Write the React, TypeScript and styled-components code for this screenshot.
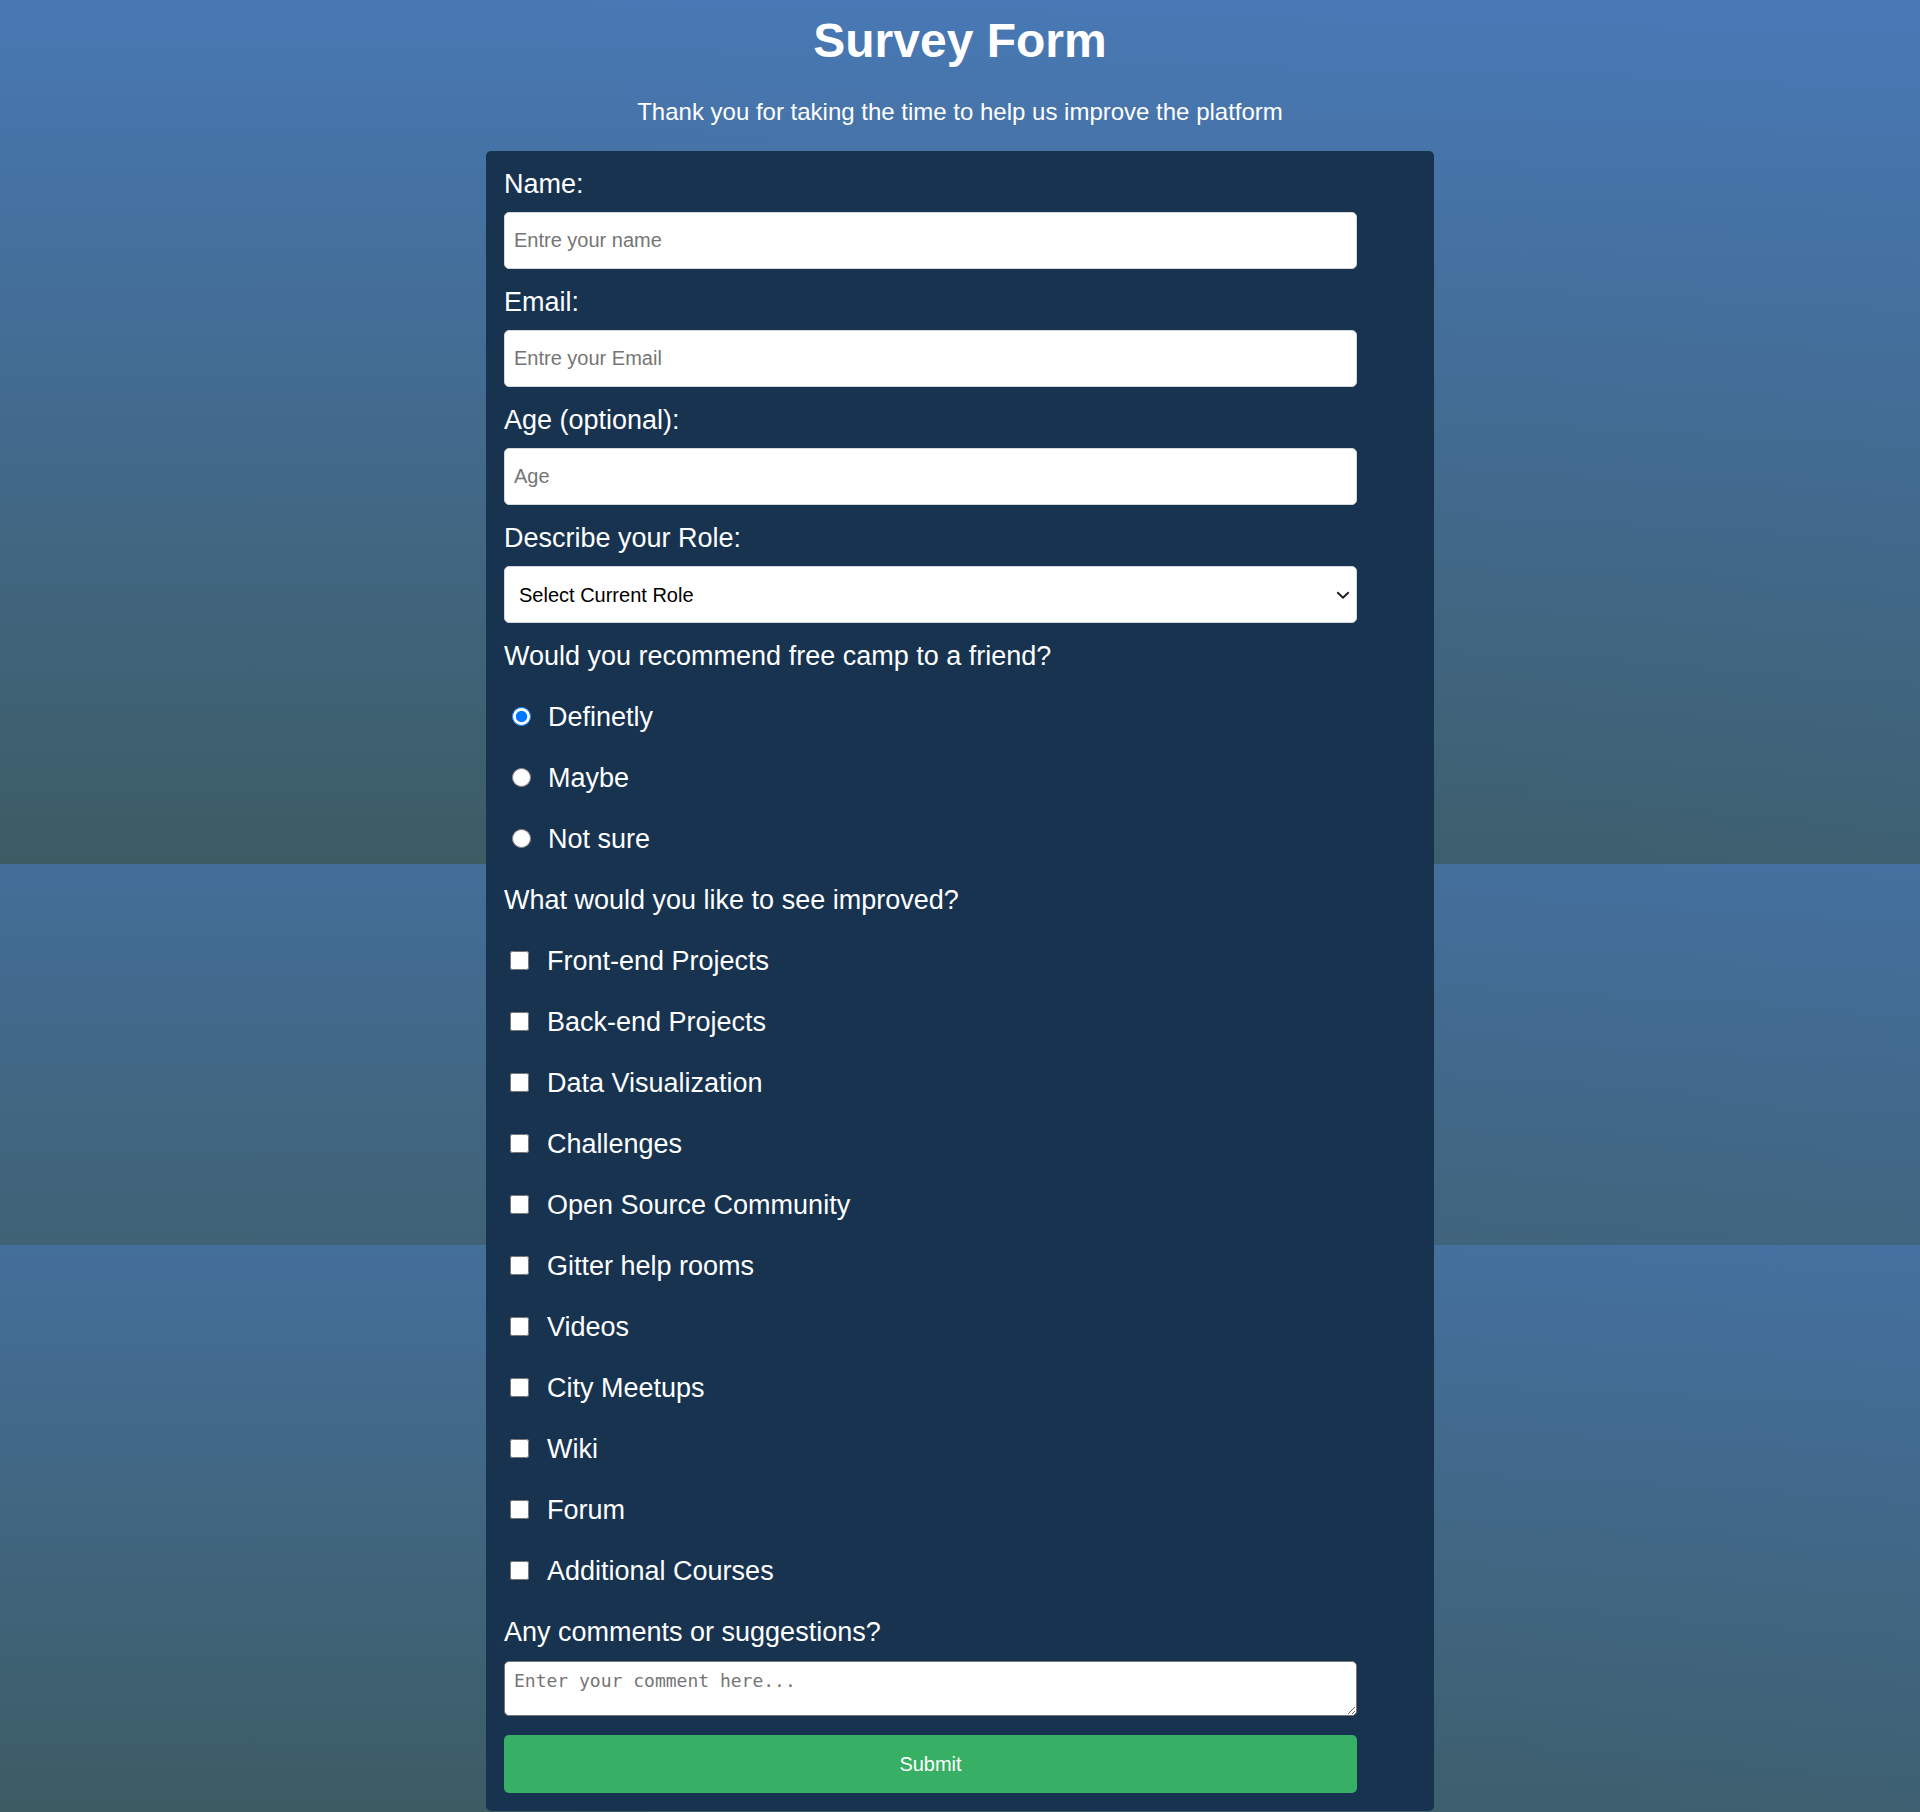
import React from "react";
import styled, { createGlobalStyle } from "styled-components";

const GlobalStyle = createGlobalStyle`
  html, body {
    margin: 0;
    padding: 0;
  }
  body {
    font-family: "Liberation Sans", Arial, sans-serif;
    color: #ffffff;
    background-color: #3c5c64;
    background-image:
      linear-gradient(to right, rgba(74, 124, 205, 0) 25%, rgba(74, 124, 205, 0.12) 100%),
      linear-gradient(
        to bottom,
        #4878b4 0px,
        #3c5c64 864px,
        #446e99 864px,
        #3f6275 1245px,
        #446f9a 1245px,
        #3c5c64 1812px
      );
    background-size: 100% 1812px, 100% 1812px;
    background-repeat: no-repeat;
  }
`;

const Page = styled.main`
  display: flex;
  flex-direction: column;
  align-items: center;
  padding: 13px 0 1px;
`;

const Title = styled.h1`
  margin: 0;
  font-size: 48px;
  line-height: 55px;
  font-weight: 700;
  text-align: center;
`;

const Subtitle = styled.p`
  margin: 30px 0 25px;
  font-size: 24px;
  line-height: 28px;
  text-align: center;
`;

const Form = styled.form`
  width: 948px;
  box-sizing: border-box;
  padding: 17px 18px 18px;
  background: #17334f;
  border-radius: 5px;
  display: flex;
  flex-direction: column;
`;

const Field = styled.div<{ $mb?: number }>`
  display: flex;
  flex-direction: column;
  margin-bottom: ${(p) => p.$mb ?? 17}px;
`;

const Label = styled.label<{ $mb?: number }>`
  display: block;
  font-size: 27px;
  line-height: 31px;
  padding-top: 1px;
  margin-bottom: ${(p) => p.$mb ?? 12}px;
`;

const controlBase = `
  display: block;
  width: 853px;
  box-sizing: border-box;
  background: #ffffff;
  border-radius: 5px;
  margin: 0;
`;

const TextInput = styled.input`
  ${controlBase}
  height: 57px;
  padding: 0 9px;
  border: 1px solid #d3d6da;
  font-family: "Liberation Sans", Arial, sans-serif;
  font-size: 20px;
  color: #000;
  &::placeholder {
    color: #757575;
  }
`;

const SelectWrap = styled.div`
  position: relative;
  width: 853px;
`;

const Select = styled.select`
  ${controlBase}
  appearance: none;
  -webkit-appearance: none;
  height: 57px;
  padding: 0 30px 0 14px;
  border: 1px solid #d3d6da;
  font-family: "Liberation Sans", Arial, sans-serif;
  font-size: 20px;
  color: #000;
`;

const Chevron = styled.svg`
  position: absolute;
  right: 7px;
  top: 50%;
  width: 14px;
  height: 8px;
  transform: translateY(-50%);
  pointer-events: none;
`;

const Option = styled.div`
  display: flex;
  align-items: center;
  height: 31px;
  margin-top: 30px;
  font-size: 27px;
  line-height: 31px;
`;

const OptionText = styled.span`
  padding-top: 2px;
`;

const Radio = styled.input`
  width: 19px;
  height: 19px;
  margin: 0 17px 0 8px;
  flex: none;
`;

const Check = styled.input`
  width: 19px;
  height: 19px;
  margin: 0 18px 0 6px;
  flex: none;
`;

const Comment = styled.textarea`
  ${controlBase}
  height: 55px;
  padding: 8px 9px;
  border: 1px solid #767676;
  font-family: "DejaVu Sans Mono", "Liberation Mono", monospace;
  font-size: 18px;
  color: #000;
  &::placeholder {
    color: #757575;
  }
`;

const Submit = styled.button`
  ${controlBase}
  height: 58px;
  margin-top: 19px;
  border: none;
  background: #37af65;
  color: #ffffff;
  font-family: "Liberation Sans", Arial, sans-serif;
  font-size: 20px;
  cursor: pointer;
`;

const recommend = ["Definetly", "Maybe", "Not sure"];
const improvements = [
  "Front-end Projects",
  "Back-end Projects",
  "Data Visualization",
  "Challenges",
  "Open Source Community",
  "Gitter help rooms",
  "Videos",
  "City Meetups",
  "Wiki",
  "Forum",
  "Additional Courses",
];

export default function App() {
  return (
    <>
      <GlobalStyle />
      <Page>
        <Title>Survey Form</Title>
        <Subtitle>Thank you for taking the time to help us improve the platform</Subtitle>
        <Form onSubmit={(e) => e.preventDefault()}>
          <Field>
            <Label htmlFor="name">Name:</Label>
            <TextInput id="name" type="text" placeholder="Entre your name" />
          </Field>
          <Field>
            <Label htmlFor="email">Email:</Label>
            <TextInput id="email" type="email" placeholder="Entre your Email" />
          </Field>
          <Field>
            <Label htmlFor="age">Age (optional):</Label>
            <TextInput id="age" type="number" placeholder="Age" />
          </Field>
          <Field>
            <Label htmlFor="role">Describe your Role:</Label>
            <SelectWrap>
              <Select id="role" defaultValue="">
                <option value="">Select Current Role</option>
                <option value="student">Student</option>
                <option value="job">Full Time Job</option>
                <option value="learner">Full Time Learner</option>
                <option value="other">Other</option>
              </Select>
              <Chevron viewBox="0 0 14 8" aria-hidden="true">
                <path
                  d="M1.3 1.2 L7 6.6 L12.7 1.2"
                  fill="none"
                  stroke="#1c1c1c"
                  strokeWidth="1.9"
                />
              </Chevron>
            </SelectWrap>
          </Field>
          <Field $mb={30}>
            <Label $mb={-1}>Would you recommend free camp to a friend?</Label>
            {recommend.map((r, i) => (
              <Option key={r}>
                <Radio type="radio" name="recommend" defaultChecked={i === 0} />
                <OptionText>{r}</OptionText>
              </Option>
            ))}
          </Field>
          <Field $mb={30}>
            <Label $mb={-1}>What would you like to see improved?</Label>
            {improvements.map((r) => (
              <Option key={r}>
                <Check type="checkbox" name="improve" />
                <OptionText>{r}</OptionText>
              </Option>
            ))}
          </Field>
          <Field $mb={0}>
            <Label htmlFor="comment" $mb={13}>
              Any comments or suggestions?
            </Label>
            <Comment id="comment" placeholder="Enter your comment here..." />
          </Field>
          <Submit type="submit">Submit</Submit>
        </Form>
      </Page>
    </>
  );
}
